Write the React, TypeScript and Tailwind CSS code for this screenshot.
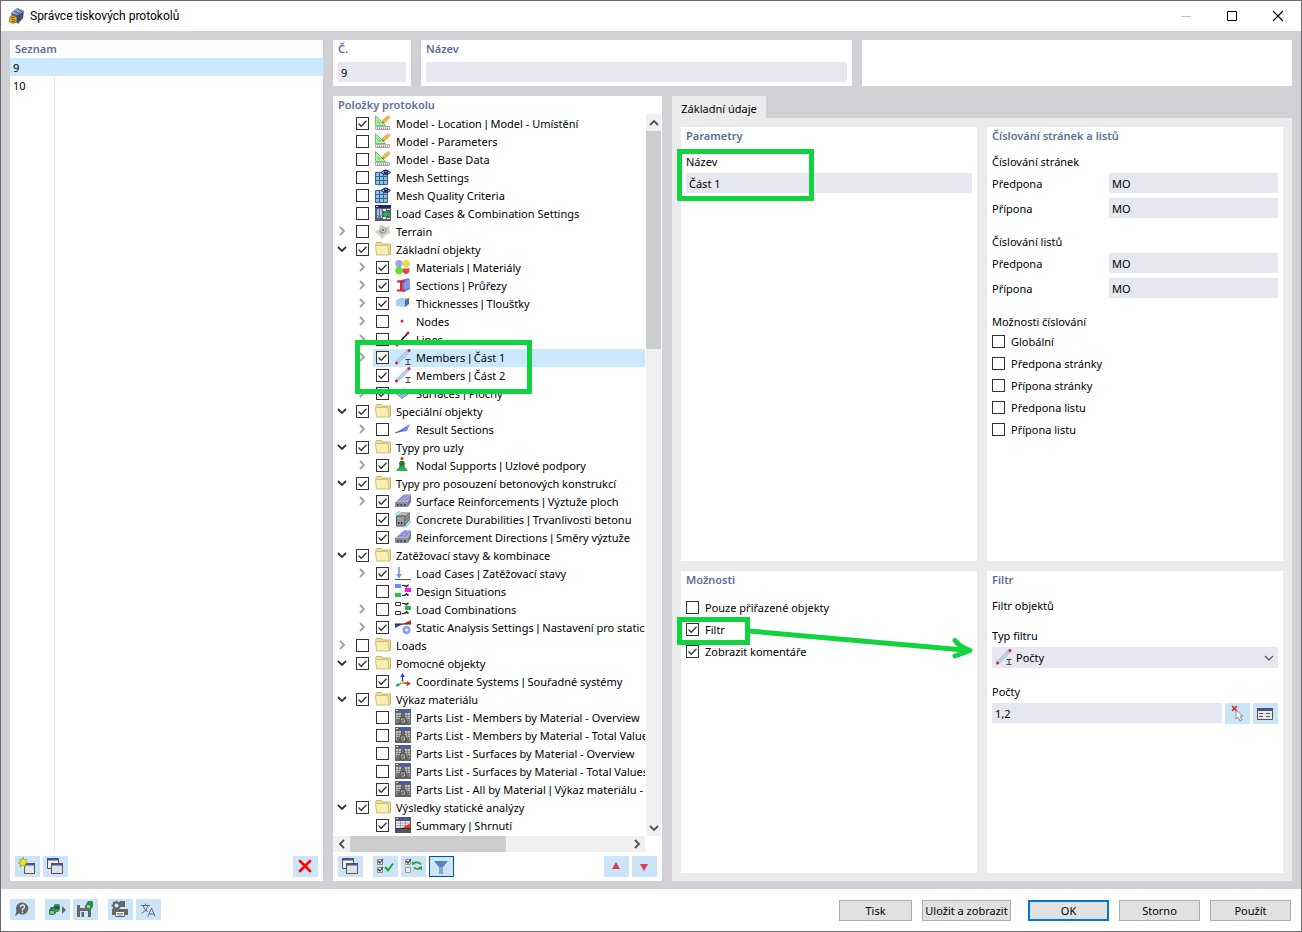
import React, { useState } from "react";
import clsx from "clsx";

type IconName =
  | "model" | "mesh" | "loadSettings" | "terrain" | "folder" | "materials" | "sections" | "thickness"
  | "node" | "line" | "member" | "surface" | "resultSection" | "support" | "surfaceReinf" | "durability"
  | "reinfDirection" | "loadCase" | "design" | "combination" | "analysis" | "axes" | "parts" | "summary";

interface TreeItem {
  label: string;
  icon: IconName;
  depth: 0 | 1;
  checked?: boolean;
  // missing means the item has no children
  open?: boolean;
  selected?: boolean;
}

const TREE: TreeItem[] = [
  { label: "Model - Location | Model - Umístění", icon: "model", depth: 0, checked: true },
  { label: "Model - Parameters", icon: "model", depth: 0 },
  { label: "Model - Base Data", icon: "model", depth: 0 },
  { label: "Mesh Settings", icon: "mesh", depth: 0 },
  { label: "Mesh Quality Criteria", icon: "mesh", depth: 0 },
  { label: "Load Cases & Combination Settings", icon: "loadSettings", depth: 0 },
  { label: "Terrain", icon: "terrain", depth: 0, open: false },
  { label: "Základní objekty", icon: "folder", depth: 0, checked: true, open: true },
  { label: "Materials | Materiály", icon: "materials", depth: 1, checked: true, open: false },
  { label: "Sections | Průřezy", icon: "sections", depth: 1, checked: true, open: false },
  { label: "Thicknesses | Tloušťky", icon: "thickness", depth: 1, checked: true, open: false },
  { label: "Nodes", icon: "node", depth: 1, open: false },
  { label: "Lines", icon: "line", depth: 1, open: false },
  { label: "Members | Část 1", icon: "member", depth: 1, checked: true, open: false, selected: true },
  { label: "Members | Část 2", icon: "member", depth: 1, checked: true },
  { label: "Surfaces | Plochy", icon: "surface", depth: 1, checked: true, open: false },
  { label: "Speciální objekty", icon: "folder", depth: 0, checked: true, open: true },
  { label: "Result Sections", icon: "resultSection", depth: 1, open: false },
  { label: "Typy pro uzly", icon: "folder", depth: 0, checked: true, open: true },
  { label: "Nodal Supports | Uzlové podpory", icon: "support", depth: 1, checked: true, open: false },
  { label: "Typy pro posouzení betonových konstrukcí", icon: "folder", depth: 0, checked: true, open: true },
  { label: "Surface Reinforcements | Výztuže ploch", icon: "surfaceReinf", depth: 1, checked: true, open: false },
  { label: "Concrete Durabilities | Trvanlivosti betonu", icon: "durability", depth: 1, checked: true },
  { label: "Reinforcement Directions | Směry výztuže", icon: "reinfDirection", depth: 1, checked: true },
  { label: "Zatěžovací stavy & kombinace", icon: "folder", depth: 0, checked: true, open: true },
  { label: "Load Cases | Zatěžovací stavy", icon: "loadCase", depth: 1, checked: true, open: false },
  { label: "Design Situations", icon: "design", depth: 1 },
  { label: "Load Combinations", icon: "combination", depth: 1, open: false },
  { label: "Static Analysis Settings | Nastavení pro statick", icon: "analysis", depth: 1, checked: true, open: false },
  { label: "Loads", icon: "folder", depth: 0, open: false },
  { label: "Pomocné objekty", icon: "folder", depth: 0, checked: true, open: true },
  { label: "Coordinate Systems | Souřadné systémy", icon: "axes", depth: 1, checked: true },
  { label: "Výkaz materiálu", icon: "folder", depth: 0, checked: true, open: true },
  { label: "Parts List - Members by Material - Overview", icon: "parts", depth: 1 },
  { label: "Parts List - Members by Material - Total Value", icon: "parts", depth: 1 },
  { label: "Parts List - Surfaces by Material - Overview", icon: "parts", depth: 1 },
  { label: "Parts List - Surfaces by Material - Total Values", icon: "parts", depth: 1 },
  { label: "Parts List - All by Material | Výkaz materiálu - V", icon: "parts", depth: 1, checked: true },
  { label: "Výsledky statické analýzy", icon: "folder", depth: 0, checked: true, open: true },
  { label: "Summary | Shrnutí", icon: "summary", depth: 1, checked: true },
];

const NUMBERING_OPTIONS = ["Globální", "Předpona stránky", "Přípona stránky", "Předpona listu", "Přípona listu"];

const ICONS: Record<IconName, React.ReactNode> = {
  model: (
    <>
      <path d="M.5.5v10h10z" fill="#b4f0a8" stroke="#6cc867" />
      <path d="M3 5.500v2.500h2.500z" fill="#fff" stroke="#6cc867" />
      <path d="M7 8l1-3 4.500-4 2 2-4.500 4.500z" fill="#f7b733" stroke="#c8862a" strokeWidth=".6" />
      <path d="M12.200 1.200L13.500 0 16 2l-1.500 1.500z" fill="#f3b3bd" />
      <path d="M7 8l.5-1.500 1.200 1z" fill="#444" />
      <path d="M.5 11.500h14v3H.5z" fill="#f4f4f4" stroke="#999" strokeWidth=".8" />
      <path d="M2.500 14.500v-2M4.500 14.500v-2M6.500 14.500v-2M8.500 14.500v-2M10.500 14.500v-2M12.500 14.500v-2" stroke="#777" strokeWidth=".8" />
    </>
  ),
  mesh: (
    <>
      <path d="M.5 3.500h12v12H.5z" fill="#8cc0ea" stroke="#33648f" />
      <path d="M4.500 3v13M8.500 3v13M0 7.500h13M0 11.500h13" stroke="#33648f" />
      <path d="M6 3.500Q10-1 15.500 3.500 11 7.500 6 3.500z" fill="#b9bde0" stroke="#26264d" />
      <circle cx="11" cy="3" r="2.400" fill="#23286c" />
      <circle cx="11" cy="2.500" r=".8" fill="#b9c4ff" />
    </>
  ),
  loadSettings: (
    <>
      <path d="M0 0h16v16H0z" fill="#59606b" />
      <path d="M0 0h16v3H0z" fill="#20287e" />
      <path d="M1 1h2v1H1z" fill="#fff" />
      <path d="M2 4h5v9H2z" fill="#a9c4dd" />
      <path d="M4.500 4v8M2.500 10l2 3 2-3" stroke="#4a6d96" fill="none" />
      <path d="M8 4h3v2H8zM8 12h3v2H8zM12 4h3v1h-3zM12 13h3v1h-3z" fill="#e8e8e8" />
      <path d="M8 9l3-3v2h4v3h-4v2z" fill="#22b84a" />
    </>
  ),
  terrain: (
    <>
      <path d="M0 9l4-3 1-5 5 3 5-1-1 4 2 3-5 2-4 4-3-4z" fill="#cfd1c8" />
      <path d="M4 8l4-4 4 2-2 4-4 1z" fill="#999b93" />
      <circle cx="8" cy="7" r="1.800" fill="#77786f" stroke="#f0f0ea" strokeWidth=".8" />
    </>
  ),
  folder: (
    <>
      <path d="M.5 3.500l1-2h5l1 1.500h8v10.500h-2" fill="#efe29a" stroke="#c9b766" />
      <path d="M.5 4.500h12.500l1 9.500H1.500z" fill="#f7eeb3" stroke="#d0bf70" />
    </>
  ),
  materials: (
    <>
      <circle cx="4" cy="4.800" r="3.700" fill="#9ba5ea" />
      <circle cx="11.200" cy="4.500" r="3.700" fill="#ecdf3d" />
      <circle cx="4" cy="11.500" r="3.700" fill="#62e027" />
      <path d="M7.500 9q3.500 1 7 0v3q-1 3-3.500 3t-3.500-3z" fill="#e04848" />
      <circle cx="7.700" cy="8" r="1.600" fill="#fff" />
    </>
  ),
  sections: (
    <>
      <path d="M2 4l12-3v3l-4 2v4l5-2v4l-6 3-3-1V5z" fill="#6c78d8" />
      <path d="M9 5l6-3v8l-6 3z" fill="#8b96e6" />
      <path d="M2 4.500h8M6 4.500v9M2 13.500h8" stroke="#e0242c" strokeWidth="2" />
    </>
  ),
  thickness: (
    <>
      <path d="M1 5l5-2h9l-4 2z" fill="#a9c8e8" />
      <path d="M1 5h9v7l-9-1z" fill="#a5d0f7" />
      <path d="M10 5l4-2v6l-4 3z" fill="#55708c" />
    </>
  ),
  node: <circle cx="7" cy="8" r="1.500" fill="#e01b1b" />,
  line: (
    <>
      <path d="M2 14L13 2" stroke="#111" strokeWidth="1.500" />
      <circle cx="13" cy="2" r="1.500" fill="#e01b1b" />
      <circle cx="2" cy="14" r="1.500" fill="#e01b1b" />
    </>
  ),
  member: (
    <>
      <path d="M1.500 14L14 1.500" stroke="#a3b6cf" strokeWidth="3.400" />
      <path d="M1.500 14L14 1.500" stroke="#b7d2f0" strokeWidth="2.400" />
      <circle cx="14" cy="1.500" r="1.500" fill="#d8232a" />
      <circle cx="1.500" cy="14" r="1.500" fill="#d8232a" />
      <path d="M10.500 10.500h5M13 10.500v5M10.500 15.500h5" stroke="#444" />
    </>
  ),
  surface: (
    <>
      <path d="M1 8l8-5 6 4-8 6z" fill="#8fb3e0" />
      <path d="M1 8l6 5v1L1 9zM7 13l8-6v1l-8 6z" fill="#6d83a8" />
    </>
  ),
  resultSection: (
    <>
      <path d="M0 12L15 3l-3 7z" fill="#7785ee" />
      <path d="M0 12l9-3" stroke="#5863c0" />
    </>
  ),
  support: (
    <>
      <path d="M5 7h4l2 6H3z" fill="#2fa84a" />
      <circle cx="7" cy="6.500" r="2.800" fill="#1d7d35" />
      <path d="M1 14l2-3h8l2 3z" fill="#35b455" />
      <circle cx="7" cy="1.500" r="1.500" fill="#e02222" />
    </>
  ),
  surfaceReinf: (
    <>
      <path d="M0 9l9-8h7l-3 8z" fill="#b9bac4" />
      <path d="M0 9h13v5H0z" fill="#8b8c96" />
      <path d="M13 9l3-8v8l-3 5z" fill="#777883" />
      <path d="M3 8l7-6M6 8l7-6M9.500 8l6-5" stroke="#7f82f0" strokeWidth="1.200" />
      <path d="M2 12h1.500M5.500 12H7M9 12h1.500" stroke="#202060" strokeWidth="1.500" />
    </>
  ),
  durability: (
    <>
      <path d="M1 5l5-4h9l-4 4z" fill="#b4b4b4" />
      <path d="M1.500 5h8.500v10H1.500z" fill="#9a9a9a" stroke="#555" />
      <path d="M10 5l5-4v8l-5 6z" fill="#777" />
      <path d="M10 8l5-4M10 11l5-4" stroke="#a8a8a8" />
      <path d="M0 4l5-4M11 16l5-6" stroke="#6fe6e6" strokeWidth="1.500" />
      <path d="M3 12h1.500M6 12h1.500" stroke="#20209a" strokeWidth="2" />
    </>
  ),
  reinfDirection: (
    <>
      <path d="M0 9l9-8h7l-3 8z" fill="#b9bac4" />
      <path d="M0 9h13v5H0z" fill="#8b8c96" />
      <path d="M13 9l3-8v8l-3 5z" fill="#777883" />
      <path d="M4 8l7-6M9 8l6-6M6 4h9M3 7h10" stroke="#7f82f0" strokeWidth="1.200" />
      <path d="M2 12h1.500M5.500 12H7M9 12h1.500" stroke="#202060" strokeWidth="1.500" />
    </>
  ),
  loadCase: (
    <>
      <path d="M4 2v9" stroke="#86aede" strokeWidth="2" />
      <path d="M1 9l3 4.500L7 9z" fill="#6f9cd6" />
      <path d="M0 14.500h16" stroke="#555" />
    </>
  ),
  design: (
    <>
      <path d="M0 1h6v4H0z" fill="#5a94ee" />
      <path d="M0 10h6v4H0z" fill="#31bf45" />
      <path d="M10 5h6v4h-6z" fill="#f719f0" />
      <path d="M7 2.500q4-.5 5 2M7 12.500q4 .5 5-2.500" stroke="#222" fill="none" strokeWidth="1.200" />
      <path d="M10 3.500h3.500V1zM10 11h3.500v2.500z" fill="#222" />
    </>
  ),
  combination: (
    <>
      <path d="M.5 1.500h5v3h-5zM.5 10.500h5v3h-5z" fill="#fff" stroke="#333" />
      <path d="M10 5h6v4h-6z" fill="#2fae46" />
      <path d="M7 2.500q4-.5 5 2M7 12.500q4 .5 5-2.500" stroke="#222" fill="none" strokeWidth="1.200" />
      <path d="M10 3.500h3.500V1zM10 11h3.500v2.500z" fill="#222" />
    </>
  ),
  analysis: (
    <>
      <path d="M0 5v4l8-4z" fill="#2547b8" />
      <path d="M8 5l8-4v4z" fill="#e0261c" />
      <path d="M0 5h16" stroke="#222" />
      <circle cx="11.500" cy="11" r="3" fill="#dbe4ff" stroke="#7f9cf0" strokeWidth="1.800" />
      <path d="M11.500 6.500v9M7 11h9M8.500 8l6 6M14.500 8l-6 6" stroke="#7f9cf0" strokeWidth=".8" />
      <circle cx="11.500" cy="11" r="1.200" fill="#fff" />
    </>
  ),
  axes: (
    <>
      <path d="M7.500 9.500V3" stroke="#1638d8" strokeWidth="1.300" />
      <path d="M5.300 4l2.200-4 2.200 4z" fill="#1638d8" />
      <path d="M7.500 9.500L3 12" stroke="#22a33c" strokeWidth="1.300" />
      <path d="M0 13.500l3-3.500 1.500 3z" fill="#22a33c" />
      <path d="M7.500 9.500l5 1" stroke="#d5301e" strokeWidth="1.300" />
      <path d="M12 8l4 3-4.500 2z" fill="#d5301e" />
      <circle cx="7.500" cy="9.500" r="1.500" fill="#f0c824" />
    </>
  ),
  parts: (
    <>
      <path d="M0 0h16v16H0z" fill="#666" />
      <path d="M1 1h2v1H1z" fill="#ddd" />
      <path d="M3 1h12v1.500H3z" fill="#3558e0" />
      <path d="M1 4h14v6H1z" fill="#c4c4c4" />
      <path d="M1 10l1 4M4 10v4M12 10v4M15 10l-1 4" stroke="#999" />
      <path d="M1 6.500h14M1 8.500h14M3.500 4v6M6.500 4v3M9.500 4v3M12.500 4v6" stroke="#777" strokeWidth=".7" />
      <path d="M5.500 7.500h5l2.500 7H3z" fill="#5e5e5e" />
      <circle cx="8" cy="6" r="1.500" fill="#888" stroke="#4c4c4c" strokeWidth="1.200" />
      <path d="M6.500 11.500V10h3M9.500 10.500V13h-3" stroke="#bdbdbd" fill="none" />
    </>
  ),
  summary: (
    <>
      <path d="M0 0h16v16H0z" fill="#55555a" />
      <path d="M1 1h2v1H1z" fill="#ddd" />
      <path d="M3 1h12v1.500H3z" fill="#3558e0" />
      <path d="M1 4h14v7H1z" fill="#e6e6e6" />
      <path d="M1 6h14M1 8.500h14M5.500 4v7M10.500 4v5" stroke="#99999e" strokeWidth=".8" />
      <path d="M0 11h8l-8 4z" fill="#2547b8" />
      <path d="M7 11l9-5v5z" fill="#e0361c" />
      <path d="M0 11.500h16" stroke="#333" />
    </>
  ),
};

function Icon({ name, className }: { name: IconName; className?: string }) {
  return (
    <svg viewBox="0 0 16 16" className={clsx("h-4 w-4 shrink-0", className)} aria-hidden="true">
      {ICONS[name]}
    </svg>
  );
}

function Check({ defaultChecked, id }: { defaultChecked?: boolean; id: string }) {
  return (
    <span className="mb-px grid h-[13px] w-[13px] shrink-0">
      <input
        id={id}
        type="checkbox"
        defaultChecked={defaultChecked}
        className="peer col-start-1 row-start-1 h-[13px] w-[13px] appearance-none border border-[#333] bg-white"
      />
      <svg
        viewBox="0 0 13 13"
        className="pointer-events-none col-start-1 row-start-1 hidden h-[13px] w-[13px] peer-checked:block"
        aria-hidden="true"
      >
        <path d="M2.500 6.500l2.700 2.700 5.300-5.500" fill="none" stroke="#333" strokeWidth="1.300" />
      </svg>
    </span>
  );
}

function CheckRow({ label, id, checked }: { label: string; id: string; checked?: boolean }) {
  return (
    <div className="flex h-[22px] items-center gap-1.5">
      <Check id={id} defaultChecked={checked} />
      <label htmlFor={id}>{label}</label>
    </div>
  );
}

function Chevron({ className, d }: { className?: string; d: string }) {
  return (
    <svg viewBox="0 0 10 10" className={clsx("h-2.5 w-2.5", className)} aria-hidden="true">
      <path d={d} fill="none" stroke="currentColor" strokeWidth="1.800" />
    </svg>
  );
}

const DOWN = "M1 3l4 4 4-4";
const UP = "M1 7l4-4 4 4";
const RIGHT = "M3 1l4 4-4 4";
const LEFT = "M7 1L3 5l4 4";

// The bar of Noto Sans is twice as wide as a normal separator, so it comes from another family
function ItemLabel({ text }: { text: string }) {
  const [name, translation] = text.split(" | ");
  if (!translation) return <span>{name}</span>;
  return (
    <span>
      {name} <span className="font-['Liberation_Sans',sans-serif]">|</span> {translation}
    </span>
  );
}

function TreeRow({ item, index }: { item: TreeItem; index: number }) {
  const id = `item-${index}`;
  return (
    <li className={clsx("flex h-[18px]", item.depth === 1 && "pl-5")}>
      <span className="grid w-5 shrink-0 place-items-center pb-0.5 pr-0.5">
        {item.open !== undefined && (
          <button type="button" aria-label={item.label} aria-expanded={item.open}>
            {item.open ? (
              <Chevron className="text-[#333]" d={DOWN} />
            ) : (
              <Chevron className="text-[#a0a0a0]" d={RIGHT} />
            )}
          </button>
        )}
      </span>
      <div className={clsx("flex min-w-0 flex-1 items-center pl-[3px]", item.selected && "bg-[#cce8ff]")}>
        <Check id={id} defaultChecked={item.checked} />
        <label htmlFor={id} className="ml-1.5 flex items-center gap-[5px] whitespace-nowrap">
          <Icon name={item.icon} className="mb-0.5" />
          <ItemLabel text={item.label} />
        </label>
      </div>
    </li>
  );
}

function Heading({ children }: { children: React.ReactNode }) {
  return <h2 className="h-[18px] shrink-0 font-semibold leading-[18px] text-[#5b6e99]">{children}</h2>;
}

function ToolButton({ label, active, children }: { label: string; active?: boolean; children: React.ReactNode }) {
  return (
    <button
      type="button"
      aria-label={label}
      className={clsx(
        "grid h-[21px] w-[25px] shrink-0 place-items-center bg-[#cce4f7] pr-px",
        active ? "border border-[#005499]" : "pb-px"
      )}
    >
      <svg viewBox="0 0 18 18" className="h-[18px] w-[18px]" aria-hidden="true">
        {children}
      </svg>
    </button>
  );
}

function TextInput({ id, value, className }: { id: string; value: string; className?: string }) {
  return (
    <input
      id={id}
      type="text"
      defaultValue={value}
      className={clsx("h-5 w-full min-w-0 bg-[#e7e7f1] px-[3px] outline-none", className)}
    />
  );
}

function AffixFields({ title, prefix }: { title: string; prefix: string }) {
  return (
    <fieldset>
      <legend className="h-5 leading-[18px]">{title}</legend>
      <div className="grid grid-cols-[117px_1fr] items-center gap-y-[5px]">
        <label htmlFor={`${prefix}-pre`} className="h-5 pt-0.5">
          Předpona
        </label>
        <TextInput id={`${prefix}-pre`} value="MO" />
        <label htmlFor={`${prefix}-suf`} className="h-5 pt-0.5">
          Přípona
        </label>
        <TextInput id={`${prefix}-suf`} value="MO" />
      </div>
    </fieldset>
  );
}

function PushButton({ children, className }: { children: React.ReactNode; className: string }) {
  return (
    <button type="button" className={clsx("h-[21px] whitespace-nowrap bg-[#e1e1e1]", className)}>
      {children}
    </button>
  );
}

const COPY_ICON = (
  <>
    <path d="M1.500 1.500h11v10h-11z" fill="#eee" stroke="#555" />
    <path d="M1 1h12v2.500H1z" fill="#555" />
    <path d="M4 2h8v1H4z" fill="#3a48ff" />
    <path d="M5.500 6.500h11v10h-11z" fill="#dfe1e6" stroke="#555" />
    <path d="M5 6h12v2.500H5z" fill="#555" />
    <path d="M8 7h8v1H8z" fill="#3a48ff" />
  </>
);

const CUBE = "M0 3l2-3h4l1 1v5L5 8H1L0 7z";

function TitleBar() {
  return (
    <header className="flex h-[30px] items-center bg-white pl-2 pr-[17px] font-[Roboto,sans-serif] text-[12px]">
      <svg viewBox="0 0 16 16" className="h-4 w-4" aria-hidden="true">
        <path d="M2 5l6-5 7 3-1 7-5 6-6-6z" fill="#48628c" />
        <path d="M2 5l6-5 7 3-6 4z" fill="#8fa8cc" />
        <path d="M5 3l6 3M9 1l4 3M9 7v8M11 6v7M13 5v6" stroke="#26374f" strokeWidth=".8" />
        <circle cx="4" cy="11.500" r="3.800" fill="#e2b72c" stroke="#9a7410" strokeWidth=".8" />
        <path d="M5.500 9.500H3v2h2.500v2H2.500" fill="none" stroke="#7a5a08" />
      </svg>
      <h1 className="ml-[5px] flex-1">Správce tiskových protokolů</h1>
      <div className="flex items-center gap-[34px] pb-px">
        <button type="button" aria-label="Minimalizovat">
          <svg viewBox="0 0 12 12" className="h-3 w-3" aria-hidden="true">
            <path d="M1 6.500h10" stroke="#c4c4c4" />
          </svg>
        </button>
        <button type="button" aria-label="Maximalizovat">
          <svg viewBox="0 0 12 12" className="h-3 w-3" aria-hidden="true">
            <path d="M1.500 1.500h9v9h-9z" fill="none" stroke="#000" />
          </svg>
        </button>
        <button type="button" aria-label="Zavřít">
          <svg viewBox="0 0 12 12" className="h-3 w-3" aria-hidden="true">
            <path d="M1 1l10 10M11 1L1 11" stroke="#000" strokeWidth="1.100" />
          </svg>
        </button>
      </div>
    </header>
  );
}

function ReportList() {
  const [selected, setSelected] = useState("9");
  return (
    <section className="flex w-[313px] shrink-0 flex-col bg-white pb-1">
      <div className="px-[5px]">
        <Heading>Seznam</Heading>
      </div>
      <table className="w-full table-fixed border-separate border-spacing-0">
        <tbody>
          {["9", "10"].map((no) => (
            <tr
              key={no}
              onClick={() => setSelected(no)}
              className={clsx("h-[18px]", selected === no && "bg-[#cce8ff]")}
            >
              <td className="w-[45px] border-r border-[#e5e5e5] p-0 pl-[3px] pt-0.5 leading-4">{no}</td>
              <td className="p-0" />
            </tr>
          ))}
        </tbody>
      </table>
      <div className="w-[45px] flex-1 border-r border-[#e5e5e5]" />
      <div className="mt-1 flex gap-[3px] px-[5px]">
        <ToolButton label="Nový">
          <path d="M6.500 6.500h10v10h-10z" fill="#e4e6ea" stroke="#555" />
          <path d="M6 6h11v2.500H6z" fill="#555" />
          <path d="M9 7h7v1H9z" fill="#3a48ff" />
          <path d="M5 0l1 3 3-1-1.500 3L10 6 7 7l.5 3L5 8 2 10l1-3-3-1 3-1.500L1.500 2 4 3z" fill="#ecec20" stroke="#8a8a20" strokeWidth=".6" />
        </ToolButton>
        <ToolButton label="Kopírovat">{COPY_ICON}</ToolButton>
        <span className="flex-1" />
        <ToolButton label="Odstranit">
          <path d="M4 4l10 10M14 4L4 14" stroke="#f30b0b" strokeWidth="2.800" strokeLinecap="round" />
        </ToolButton>
      </div>
    </section>
  );
}

function ReportItems() {
  return (
    <section className="flex w-[329px] shrink-0 flex-col bg-white pb-1">
      <div className="px-[5px]">
        <Heading>Položky protokolu</Heading>
      </div>
      <div className="relative flex flex-1">
        <ul className="min-w-0 flex-1 overflow-hidden pt-px">
          {TREE.map((item, i) => (
            <TreeRow key={i} item={item} index={i} />
          ))}
        </ul>
        <div className="mx-px flex w-[15px] flex-col items-center bg-[#f0f0f0] text-[#505050]">
          <span className="grid h-[17px] place-items-center">
            <Chevron d={UP} />
          </span>
          <span className="h-[218px] w-full bg-[#cdcdcd]" />
          <span className="mt-auto grid h-[17px] place-items-center">
            <Chevron d={DOWN} />
          </span>
        </div>
        <div className="pointer-events-none absolute left-[22px] top-[226px] h-[54px] w-[177px] border-[5px] border-[#10d43f]" />
      </div>
      <div className="mr-[17px] flex h-4 items-center bg-[#f0f0f0] text-[#505050]">
        <span className="grid w-[17px] place-items-center">
          <Chevron d={LEFT} />
        </span>
        <span className="h-full w-[156px] bg-[#cdcdcd]" />
        <span className="ml-auto grid w-[17px] place-items-center">
          <Chevron d={RIGHT} />
        </span>
      </div>
      <div className="mt-1 flex gap-[3px] px-[5px]">
        <ToolButton label="Kopírovat položku">{COPY_ICON}</ToolButton>
        <span className="w-1" />
        <ToolButton label="Vybrat vše">
          <path d="M1.500 2.500h5v5h-5zM1.500 10.500h5v5h-5z" fill="#fff" stroke="#888" />
          <path d="M2 4l2 2 3-4M2 12l2 2 3-4" fill="none" stroke="#333" strokeWidth="1.200" />
          <path d="M9 10l3 3.500 5-7" fill="none" stroke="#17a33e" strokeWidth="2" />
        </ToolButton>
        <ToolButton label="Obrátit výběr">
          <path d="M1.500 2.500h5v5h-5zM1.500 10.500h5v5h-5z" fill="#e4eef7" stroke="#999" />
          <path d="M2 4l2 2 3-4" fill="none" stroke="#333" strokeWidth="1.200" />
          <path d="M10 6q4-2 7 1.500M16 11.500q-3 1.500-6-1" fill="none" stroke="#35a04b" strokeWidth="1.800" />
          <path d="M8 8V4l4 3zM18 9v4.500l-4-3z" fill="#35a04b" />
        </ToolButton>
        <ToolButton label="Filtr položek" active>
          <path d="M2 3h14l-5 6v7H7V9z" fill="#5b7fc0" />
          <path d="M7 9h4v7H7z" fill="#86a5dc" />
        </ToolButton>
        <span className="flex-1" />
        <ToolButton label="Nahoru">
          <path d="M5 12l4-7 4 7z" fill="#dd3f45" />
        </ToolButton>
        <ToolButton label="Dolů">
          <path d="M5 7l4 7 4-7z" fill="#dd3f45" />
        </ToolButton>
      </div>
    </section>
  );
}

function BasicTab() {
  return (
    <section className="flex min-w-0 flex-1 flex-col">
      <div role="tablist">
        <button type="button" role="tab" aria-selected="true" className="h-[22px] w-[94px] bg-[#ebebeb] pt-1">
          Základní údaje
        </button>
      </div>
      <div className="grid flex-1 grid-cols-2 grid-rows-[434fr_302fr] gap-2.5 bg-[#ebebeb] px-[9px] pb-2 pt-[9px]">
        <div className="relative bg-white px-[5px]">
          <Heading>Parametry</Heading>
          <label htmlFor="part-name" className="mt-2 block h-5 leading-[18px]">
            Název
          </label>
          <TextInput id="part-name" value="Část 1" />
          <div className="pointer-events-none absolute -left-1 top-[22px] h-[52px] w-[137px] border-[5px] border-[#10d43f]" />
        </div>

        <div className="flex flex-col bg-white px-[5px]">
          <Heading>Číslování stránek a listů</Heading>
          <div className="mt-2 flex flex-col gap-[15px]">
            <AffixFields title="Číslování stránek" prefix="page" />
            <AffixFields title="Číslování listů" prefix="sheet" />
            <fieldset>
              <legend className="h-[18px] leading-[18px]">Možnosti číslování</legend>
              {NUMBERING_OPTIONS.map((label, i) => (
                <CheckRow key={label} id={`numbering-${i}`} label={label} />
              ))}
            </fieldset>
          </div>
        </div>

        <div className="relative bg-white px-[5px]">
          <Heading>Možnosti</Heading>
          <div className="mt-2">
            <CheckRow id="only-assigned" label="Pouze přiřazené objekty" />
            <CheckRow id="use-filter" label="Filtr" checked />
            <CheckRow id="show-comments" label="Zobrazit komentáře" checked />
          </div>
          <div className="pointer-events-none absolute -left-1 top-[46px] h-7 w-[73px] border-[5px] border-[#10d43f]" />
          <svg
            viewBox="0 0 230 36"
            className="pointer-events-none absolute left-[66px] top-[54px] h-9 w-[230px]"
            aria-hidden="true"
          >
            <path
              d="M2 6l221 19.500M208 15.500q3 5 15 10l-15 5.500"
              fill="none"
              stroke="#10d43f"
              strokeWidth="5"
              strokeLinecap="round"
              strokeLinejoin="round"
            />
          </svg>
        </div>

        <div className="bg-white px-[5px]">
          <Heading>Filtr</Heading>
          <p className="mt-2 h-[18px] leading-[18px]">Filtr objektů</p>
          <label htmlFor="filter-type" className="mt-3 block h-5 leading-[18px]">
            Typ filtru
          </label>
          <div className="relative">
            <select id="filter-type" className="h-[21px] w-full appearance-none bg-[#e7e7f1] pl-6 outline-none">
              <option>Počty</option>
            </select>
            <span className="pointer-events-none absolute inset-y-0 left-1 flex items-center">
              <Icon name="member" className="mb-px" />
            </span>
            <span className="pointer-events-none absolute inset-y-0 right-1 flex items-center text-[#555]">
              <svg viewBox="0 0 10 10" className="h-2.5 w-2.5" aria-hidden="true">
                <path d="M1 3l4 4 4-4" fill="none" stroke="currentColor" strokeWidth="1.200" />
              </svg>
            </span>
          </div>
          <label htmlFor="filter-numbers" className="mt-[15px] block h-5 leading-[18px]">
            Počty
          </label>
          <div className="flex gap-[3px]">
            <TextInput id="filter-numbers" value="1,2" />
            <ToolButton label="Vybrat v grafice">
              <path d="M4 2l5 5M9 2L4 7" stroke="#e01b1b" strokeWidth="1.500" />
              <path d="M8 6v9l2-2 2 4 2-1-2-4h3z" fill="#fff" stroke="#777" strokeWidth=".8" />
            </ToolButton>
            <ToolButton label="Vybrat ze seznamu">
              <path d="M1.500 4.500h15v11h-15z" fill="#e6e8ec" stroke="#555" />
              <path d="M1 4h16v3H1z" fill="#555" />
              <path d="M4 5h12v1H4z" fill="#3a48ff" />
              <path d="M3 9.500h5M10 9.500h5M3 12.500h5M10 12.500h5" stroke="#555" strokeDasharray="4 1" />
            </ToolButton>
          </div>
        </div>
      </div>
    </section>
  );
}

function Footer() {
  return (
    <footer className="flex min-h-[42px] items-start gap-[3px] bg-white pl-[9px] pr-2.5 pt-2.5">
      <ToolButton label="Nápověda">
        <path d="M9.500 2.500a6 6 0 1 1-3.500 11L2 16l1.500-5A6 6 0 0 1 9.500 2.500z" fill="#666" />
        <path d="M7.500 7q0-2 2-2t2 2q0 1-2 2.200V10.500M9.500 11.500V13" fill="none" stroke="#d6e8f6" strokeWidth="1.400" />
      </ToolButton>
      <span className="w-1" />
      <ToolButton label="Načíst šablonu">
        <g transform="translate(1 7)">
          <path d={CUBE} fill="#2c7a45" />
          <path d="M1 4h4v3H1z" fill="#72cf8e" />
        </g>
        <g transform="translate(5 4)">
          <path d={CUBE} fill="#39935a" />
          <path d="M1 2h5v3H2z" fill="#1e5e35" />
        </g>
        <path d="M14 6l4 4-4 4z" fill="#666" />
      </ToolButton>
      <ToolButton label="Uložit šablonu">
        <path d="M1 5h11l3 3v9H1z" fill="#666" />
        <path d="M4 5h5v3H4zM4 11h8v6H4z" fill="#cce4f7" />
        <path d="M5.500 12h2.500v5H5.500z" fill="#666" />
        <g transform="translate(10 1)">
          <path d={CUBE} fill="#2f8a4d" />
          <path d="M1 4h3v3H1z" fill="#83d89c" />
        </g>
      </ToolButton>
      <span className="w-1" />
      <ToolButton label="Nastavení tisku">
        <path d="M9 1h5v6H9zM1 9h16v6H1z" fill="#666" />
        <circle cx="5.500" cy="5.500" r="3" fill="#cce4f7" stroke="#666" strokeWidth="2" />
        <path d="M5.500.5v2M5.500 8.500v2M.5 5.500h2M8.500 5.500h2M2 2l1.500 1.500M9 2L7.500 3.500M2 9l1.500-1.500" stroke="#666" strokeWidth="1.500" />
        <path d="M4.500 11.500h9v5h-9z" fill="#fff" stroke="#666" />
        <path d="M6 13.500h6M6 15h6" stroke="#666" strokeWidth=".8" />
      </ToolButton>
      <ToolButton label="Jazyk">
        <path d="M2 5.500h9M6.500 3.500v2M9 5.500q-1 5-6.500 8M4 5.500q1 4 5 6.500" fill="none" stroke="#666" />
        <path d="M9 16.500l3.500-8.500 3.500 8.500M10.200 14h4.600" fill="none" stroke="#666" />
      </ToolButton>
      <span className="flex-1" />
      <div className="flex gap-2.5 pt-px">
        <PushButton className="w-[73px] border border-[#adadad]">Tisk</PushButton>
        <PushButton className="mr-[7px] w-[89px] border border-[#adadad]">Uložit a zobrazit</PushButton>
        <PushButton className="w-[81px] border-2 border-[#0078d7]">OK</PushButton>
        <PushButton className="w-[81px] border border-[#adadad]">Storno</PushButton>
        <PushButton className="w-[81px] border border-[#adadad]">Použít</PushButton>
      </div>
    </footer>
  );
}

export default function App() {
  return (
    <div className="flex min-h-screen flex-col border border-[#6b6b6b] bg-white font-['Noto_Sans',sans-serif] text-[11px] leading-[18px] text-black">
      <TitleBar />
      <main className="flex flex-1 gap-2.5 bg-[#d1d0d5] px-[9px] pb-2 pt-[9px]">
        <ReportList />
        <div className="flex min-w-0 flex-1 flex-col gap-2.5">
          <div className="grid grid-cols-[78px_1fr_1fr] gap-2.5">
            <div className="bg-white px-[5px] pb-1">
              <Heading>
                <label htmlFor="report-no">Č.</label>
              </Heading>
              <TextInput id="report-no" value="9" className="mt-1 block" />
            </div>
            <div className="bg-white px-[5px] pb-1">
              <Heading>
                <label htmlFor="report-name">Název</label>
              </Heading>
              <TextInput id="report-name" value="" className="mt-1 block" />
            </div>
            <div className="bg-white" />
          </div>
          <div className="flex flex-1 gap-2.5">
            <ReportItems />
            <BasicTab />
          </div>
        </div>
      </main>
      <Footer />
    </div>
  );
}
